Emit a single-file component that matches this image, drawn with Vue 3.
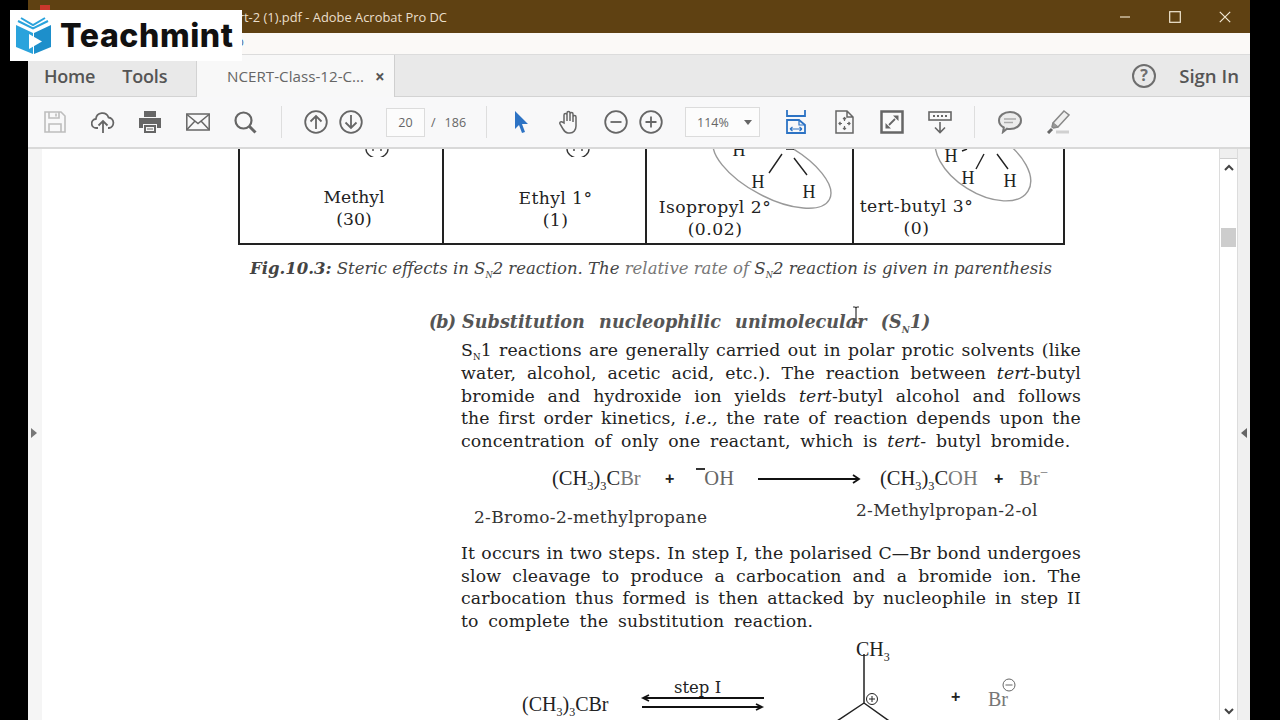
<template>
  <div class="window">
    <header class="titlebar">
      <span class="pdf-icon"></span>
      <span class="title">NCERT-Class-12-Chemistry-Part-2 (1).pdf - Adobe Acrobat Pro DC</span>
      <div class="win-controls">
        <svg width="12" height="12" viewBox="0 0 12 12"><path d="M1 6h10" stroke="#e9dcc4" stroke-width="1.2"/></svg>
        <svg width="12" height="12" viewBox="0 0 12 12"><rect x=".7" y=".7" width="10.6" height="10.6" fill="none" stroke="#f2e8d4" stroke-width="1.2"/></svg>
        <svg width="12" height="12" viewBox="0 0 12 12"><path d="M.8.8l10.4 10.4M11.2.8L.8 11.2" stroke="#f2e8d4" stroke-width="1.2"/></svg>
      </div>
    </header>
    <div class="menubar"><span class="menu-tail">Help</span></div>
    <nav class="tabs">
      <div class="tab-home"><span>Home</span><span>Tools</span></div>
      <div class="tab-doc"><span>NCERT-Class-12-C...</span><b class="tab-x">×</b></div>
      <div class="tab-fill">
        <svg width="26" height="26" viewBox="0 0 26 26"><circle cx="13" cy="13" r="11" fill="none" stroke="#6e6e6e" stroke-width="2"/><text x="13" y="18" text-anchor="middle" class="qm">?</text></svg>
        <span>Sign In</span>
      </div>
    </nav>
    <div class="toolbar">
      <div class="tool-group g1">
        <svg class="ic" viewBox="0 0 24 24" fill="none" stroke="#bdbdbd" stroke-width="1.6"><path d="M2 2h16l4 4v16H2zM6 2v6h10V2M6 22v-8h12v8"/><path d="M13 3.500v3"/></svg>
        <svg class="ic" viewBox="0 0 24 24" fill="none" stroke="#666" stroke-width="1.8"><path d="M7 18H5.500a4.500 4.500 0 0 1-.6-9A6.500 6.500 0 0 1 17.500 7.500 5.300 5.300 0 0 1 18 18h-1"/><path d="M12 23V11M7.500 15.500L12 11l4.500 4.500"/></svg>
        <svg class="ic" viewBox="0 0 24 24"><path fill="#666" d="M6 1h12v6H6zM1 8h22v10h-4v-4H5v4H1z"/><path fill="#666" d="M6 15h12v8H6z"/><path fill="#f7f7f7" d="M8 17h8v4H8z"/><path fill="#666" d="M9 18.500h6v1H9z"/></svg>
        <svg class="ic" viewBox="0 0 24 24" fill="none" stroke="#666" stroke-width="1.5"><rect x=".8" y="4" width="22.400" height="16"/><path d="M1 4.500l11 9 11-9M1 19.500l8-8.500M23 19.500l-8-8.500"/></svg>
        <svg class="ic" viewBox="0 0 24 24" fill="none" stroke="#666" stroke-width="2.200"><circle cx="10.500" cy="10.500" r="8"/><path d="M16.500 16.500l6 6" stroke-width="3"/></svg>
      </div>
      <i class="sep s1"></i>
      <div class="tool-group g2">
        <svg class="ic" viewBox="0 0 24 24" fill="none" stroke="#666" stroke-width="1.800"><circle cx="12" cy="12" r="10.800"/><path d="M12 19V6M6.500 11.500L12 6l5.500 5.500"/></svg>
        <svg class="ic" viewBox="0 0 24 24" fill="none" stroke="#666" stroke-width="1.800"><circle cx="12" cy="12" r="10.800"/><path d="M12 5v13M6.500 12.500L12 18l5.500-5.500"/></svg>
      </div>
      <div class="page-box">20</div>
      <span class="page-total"><span>/</span><span>186</span></span>
      <i class="sep s2"></i>
      <div class="tool-group g3">
        <svg class="ic" viewBox="0 0 24 24"><path fill="#2d73c4" d="M6 1l13 13h-6l3 8-3 1-3-8-4 4z"/></svg>
        <svg class="ic hand" viewBox="0 0 24 24" fill="none" stroke="#666" stroke-width="1.500"><path d="M7 13V5a1.500 1.500 0 0 1 3 0v6V3a1.500 1.500 0 0 1 3 0v8V4a1.500 1.500 0 0 1 3 0v8V7a1.500 1.500 0 0 1 3 0v9c0 4-2.500 7-6 7h-2c-2.500 0-3.500-1.500-5-4l-3-5c-1-2 1.500-3 3-1.500z"/></svg>
        <svg class="ic c1" viewBox="0 0 24 24" fill="none" stroke="#666" stroke-width="1.800"><circle cx="12" cy="12" r="10.800"/><path d="M6.500 12h11"/></svg>
        <svg class="ic c2" viewBox="0 0 24 24" fill="none" stroke="#666" stroke-width="1.800"><circle cx="12" cy="12" r="10.800"/><path d="M6.500 12h11M12 6.500v11"/></svg>
      </div>
      <div class="zoom-box"><span>114%</span><i class="caret"></i></div>
      <div class="tool-group g4">
        <svg class="ic" viewBox="0 0 24 24" fill="none" stroke="#2d73c4" stroke-width="1.800"><path d="M3 0v6h18V0M3 23V10h12l6 5v8z"/><path d="M15 10v5h6M6 19h12M6 19l2.500-2M6 19l2.500 2M18 19l-2.500-2M18 19l-2.500 2" stroke-width="1.200"/></svg>
        <svg class="ic" viewBox="0 0 24 24" fill="none" stroke="#666" stroke-width="1.500"><path d="M4 1h11l6 6v16H4zM15 1v6h6"/><path d="M12.500 7.500v3.500M12.500 16v3.500M7 13.500h3M15 13.500h3M11 9l1.500-1.500L14 9M11 18l1.500 1.500L14 18M8.500 12L7 13.500 8.500 15M16.500 12l1.500 1.500-1.500 1.500" stroke-width="1.200"/></svg>
        <svg class="ic" viewBox="0 0 24 24"><rect x="1.500" y="1.500" width="21" height="21" fill="#fafafa" stroke="#666" stroke-width="2.500"/><path d="M13 5.500h5.500V11zM5.500 13v5.500H11z" fill="#666"/><path d="M15 9l-6 6" stroke="#666" stroke-width="1.800"/></svg>
        <svg class="ic" viewBox="0 0 24 24" fill="none" stroke="#666" stroke-width="1.600"><rect x="1" y="2" width="22" height="8"/><path d="M5 6h2M9 6h2M13 6h2M17 6h2" stroke-width="2"/><path d="M12 12v10M7 17.500l5 5 5-5"/></svg>
      </div>
      <i class="sep s3"></i>
      <div class="tool-group g5">
        <svg class="ic" viewBox="0 0 24 24" fill="none" stroke="#777" stroke-width="2"><path d="M12 2c6 0 11 3.500 11 8.500S18 19 12 19c-1 0-2 0-3-.3L5 22l.8-4.500C3 16 1 13.500 1 10.500 1 5.500 6 2 12 2z" fill="#ececec"/><path d="M6 9h12M6 12.500h9" stroke="#aaa" stroke-width="1.500"/></svg>
        <svg class="ic" viewBox="0 0 24 24" fill="none" stroke="#888" stroke-width="1.500"><path d="M18 1l5 4-11 12-5-4z" fill="#f0f0f0"/><path d="M7 13l-1 4 1.500 1L12 17" fill="#999"/><path d="M2 23l4-4" stroke="#666" stroke-width="3"/><path d="M10 22h13" stroke="#d0d0d0" stroke-width="3"/></svg>
      </div>
    </div>

    <main class="viewer">
      <aside class="rail">
        <svg width="6" height="10" viewBox="0 0 6 10"><path d="M0 0l6 5-6 5z" fill="#777"/></svg>
      </aside>
      <section class="page">
        <div class="rate-table">
          <div class="cell cell-a">
            <svg class="lone" width="26" height="8" viewBox="0 0 26 8" fill="none" stroke="#333" stroke-width="1.300"><path d="M2 0a11 9 0 0 0 22 0M9 0v2M17 0v2"/></svg>
            <span>Methyl</span><span>(30)</span>
          </div>
          <div class="cell cell-b">
            <svg class="lone" width="26" height="8" viewBox="0 0 26 8" fill="none" stroke="#333" stroke-width="1.300"><path d="M2 0a11 9 0 0 0 22 0M9 0v2M17 0v2"/></svg>
            <span>Ethyl 1°</span><span>(1)</span>
          </div>
          <div class="cell cell-c">
            <svg class="mol" width="207" height="94" viewBox="647 148 207 94">
              <ellipse cx="772" cy="168" rx="65" ry="28" transform="rotate(28 772 168)" fill="none" stroke="#999" stroke-width="1.400"/>
              <path d="M782 153L769 172M794 157l13 17M786 148h8" stroke="#222" stroke-width="1.400" fill="none"/>
              <text x="739" y="155" class="h">H</text><text x="758" y="187" class="h">H</text><text x="809" y="197" class="h">H</text>
            </svg>
            <span>Isopropyl 2°</span><span>(0.02)</span>
          </div>
          <div class="cell cell-d">
            <svg class="mol" width="211" height="94" viewBox="854 148 211 94">
              <ellipse cx="983" cy="162" rx="53" ry="30" transform="rotate(32 983 162)" fill="none" stroke="#999" stroke-width="1.400"/>
              <path d="M984 153l-8 15M997 153l11 15M962 150l5-2" stroke="#222" stroke-width="1.400" fill="none"/>
              <text x="951" y="161" class="h">H</text><text x="968" y="183" class="h">H</text><text x="1010" y="186" class="h">H</text>
            </svg>
            <span>tert-butyl 3°</span><span>(0)</span>
          </div>
        </div>

        <p class="caption"><b>Fig.10.3:</b> Steric effects in S<sub>N</sub>2 reaction. The <span class="fade">relative rate of</span> S<sub>N</sub>2 reaction is given in parenthesis</p>

        <h3 class="heading"><span class="b-mark">(b)</span> Substitution&nbsp; nucleophilic&nbsp; unimolecular&nbsp; (S<sub>N</sub>1)
          <svg class="ibeam" width="8" height="18" viewBox="0 0 8 18" fill="none" stroke="#333" stroke-width="1.200"><path d="M1 1h2l1 1 1-1h2M4 2v14M1 17h2l1-1 1 1h2"/></svg>
        </h3>

        <div class="para p1">
          <p>S<sub>N</sub>1 reactions are generally carried out in polar protic solvents (like</p>
          <p>water, alcohol, acetic acid, etc.). The reaction between <em>tert</em>-butyl</p>
          <p>bromide and hydroxide ion yields <em>tert</em>-butyl alcohol and follows</p>
          <p>the first order kinetics, <em>i.e.,</em> the rate of reaction depends upon the</p>
          <p class="last">concentration of only one reactant, which is <em>tert-</em> butyl bromide.</p>
        </div>

        <div class="eq">
          <span class="f1">(CH<sub>3</sub>)<sub>3</sub>C<span class="fade">Br</span></span>
          <span class="plus p-a">+</span>
          <span class="oh"><span class="bar"></span>OH</span>
          <svg class="arrow" width="103" height="10" viewBox="0 0 103 10" fill="none" stroke="#111" stroke-width="1.800"><path d="M0 5h101M95 1l6 4-6 4"/></svg>
          <span class="f2">(CH<sub>3</sub>)<sub>3</sub>C<span class="fade">OH</span></span>
          <span class="plus p-b">+</span>
          <span class="fade br">Br<sup>−</sup></span>
        </div>
        <div class="names">
          <span class="n1">2-Bromo-2-methylpropane</span>
          <span class="n2">2-Methylpropan-2-ol</span>
        </div>

        <div class="para p2">
          <p>It occurs in two steps. In step I, the polarised C—Br bond undergoes</p>
          <p>slow cleavage to produce a carbocation and a bromide ion. The</p>
          <p>carbocation thus formed is then attacked by nucleophile in step II</p>
          <p class="last">to complete the substitution reaction.</p>
        </div>

        <div class="mech">
          <span class="m-left">(CH<sub>3</sub>)<sub>3</sub>C<span class="fade">Br</span></span>
          <span class="m-step">step I</span>
          <svg class="m-arrows" width="124" height="14" viewBox="0 0 124 14" fill="none" stroke="#111" stroke-width="1.800"><path d="M123 2H2M8-1L2 2l6 3M1 11h120M115 8l6 3-6 3"/></svg>
          <span class="m-ch3">CH<sub>3</sub></span>
          <svg class="m-struct" width="70" height="62" viewBox="0 0 70 62" fill="none" stroke="#222" stroke-width="1.500"><path d="M32-9v49M32 40L2 60M32 40l28 20"/><circle cx="40" cy="36" r="5.500" stroke-width="1"/><path d="M37 36h6M40 33v6" stroke-width="1"/></svg>
          <span class="m-plus">+</span>
          <span class="m-br fade">Br</span>
          <svg class="m-neg" width="14" height="14" viewBox="0 0 14 14" fill="none" stroke="#666" stroke-width="1"><circle cx="7" cy="7" r="6"/><path d="M3.500 7h7"/></svg>
        </div>
      </section>
      <div class="scrollbar">
        <div class="sb-top"></div>
        <svg class="sb-arrow" width="10" height="7" viewBox="0 0 10 7" fill="none" stroke="#444" stroke-width="2"><path d="M1 6l4-4 4 4"/></svg>
        <div class="sb-thumb"></div>
        <svg class="sb-arrow sb-down" width="10" height="7" viewBox="0 0 10 7" fill="none" stroke="#444" stroke-width="2"><path d="M1 1l4 4 4-4"/></svg>
      </div>
      <aside class="rail rail-r">
        <svg width="6" height="10" viewBox="0 0 6 10"><path d="M6 0L0 5l6 5z" fill="#666"/></svg>
      </aside>
    </main>
  </div>

  <div class="logo">
    <svg width="38" height="38" viewBox="0 0 38 38">
      <path d="M1 8l17 8v21L1 30z" fill="#2aa3dc"/>
      <path d="M36 8L19 16v21l17-7z" fill="#1d8fcb"/>
      <path d="M3 4l15 7.500L33 4M6 1l12 7 12-7" fill="none" stroke="#2aa3dc" stroke-width="2"/>
      <path d="M14 17l13 7.500L14 32z" fill="#fff"/>
    </svg>
    <span>Teachmint</span>
  </div>
</template>

<script setup>
</script>

<style>
html, body { margin: 0; background: #000; overflow: hidden; }
</style>

<style scoped>
.window { margin-left: 28px; width: 1222px; height: 720px; display: flex; flex-direction: column; overflow: hidden; background: #fff; font-family: "Open Sans", sans-serif; }
.titlebar { height: 33px; flex: none; background: #5f4112; display: flex; align-items: center; position: relative; }
.pdf-icon { width: 10px; height: 12px; margin-left: 12px; background: #c9372c; flex: none; align-self: flex-start; margin-top: 5px; }
.title { color: #eadfcb; font-size: 12.900px; margin-left: -1px; white-space: nowrap; width: 398px; display: flex; justify-content: flex-end; }
.win-controls { margin-left: auto; display: flex; gap: 38px; padding-right: 19px; }
.menubar { height: 22px; flex: none; background: #fbf9f7; border-bottom: 1px solid #dcdcdc; box-sizing: border-box; padding-left: 190px; font-size: 12px; color: #3a6ea5; line-height: 18px; }
.menu-tail { display: inline-block; width: 30px; }
.tabs { height: 42px; flex: none; display: flex; background: #e9e9e9; border-bottom: 1px solid #d3d3d3; box-sizing: border-box; color: #555; font-weight: 600; font-size: 18px; }
.tab-home { width: 168px; display: flex; align-items: center; gap: 27px; padding-left: 16px; box-sizing: border-box; letter-spacing: -.2px; }
.tab-doc { width: 199px; height: 42px; background: #f8f8f8; border-left: 1px solid #d3d3d3; border-right: 1px solid #cfcfcf; box-sizing: border-box; display: flex; align-items: center; padding-left: 30px; font-weight: 400; font-size: 15.200px; color: #666; white-space: nowrap; }
.tab-x { margin-left: 11px; font-size: 17px; font-weight: 700; color: #555; }
.tab-fill { flex: 1; display: flex; align-items: center; justify-content: flex-end; gap: 22px; padding-right: 11px; font-size: 18.600px; }
.qm { font: 700 16px "Open Sans", sans-serif; fill: #6e6e6e; }
.toolbar { height: 52px; flex: none; background: #f8f8f9; border-bottom: 2px solid #d9d9d9; box-sizing: border-box; display: flex; align-items: center; padding-left: 15px; color: #666; font-size: 12.500px; }
.tool-group { display: flex; align-items: center; }
.ic { width: 24px; height: 24px; flex: none; }
.g1 { gap: 23.500px; }
.sep { width: 1px; height: 32px; background: #dedede; flex: none; }
.s1 { margin-left: 24px; }
.g2 { margin-left: 22px; gap: 11px; }
.page-box { margin-left: 23px; width: 39px; height: 29px; border: 1px solid #dcdcdc; background: #fcfcfc; box-sizing: border-box; text-align: center; line-height: 27px; flex: none; }
.page-total { margin-left: 6px; display: flex; gap: 9px; width: 55px; }
.s2 { margin-left: 0; }
.g3 { margin-left: 22px; }
.hand { margin-left: 24px; }
.c1 { margin-left: 23px; }
.c2 { margin-left: 11px; }
.zoom-box { margin-left: 22px; width: 75px; height: 30px; border: 1px solid #dcdcdc; background: #fcfcfc; box-sizing: border-box; display: flex; align-items: center; padding-left: 11px; flex: none; }
.caret { margin-left: 15px; width: 0; height: 0; border-left: 4px solid transparent; border-right: 4px solid transparent; border-top: 5px solid #666; }
.g4 { margin-left: 24px; gap: 24px; }
.s3 { margin-left: 22px; }
.g5 { margin-left: 23px; gap: 24px; }

.viewer { flex: 1; min-height: 0; display: flex; overflow: hidden; }
.rail { width: 14px; flex: none; background: #f5f5f5; display: flex; align-items: center; padding-left: 3px; box-sizing: border-box; padding-bottom: 3px; }
.rail-r { width: 12px; background: #f0f0f0; padding-left: 3px; }
.page { flex: 1; min-width: 0; background: #fff; color: #222; font-family: "DejaVu Serif", serif; overflow: hidden; }

.rate-table { margin-left: 196px; width: 827px; height: 96px; box-sizing: border-box; display: grid; grid-template-columns: 204px 203px 207px 1fr; border: 2px solid #222; border-top: 0; }
.cell { position: relative; display: flex; flex-direction: column; align-items: center; justify-content: flex-end; font-family: "DejaVu Serif", serif; font-size: 17.200px; line-height: 22px; border-right: 2px solid #222; color: #222; }
.cell-a { padding-bottom: 13px; padding-left: 26px; }
.cell-b { padding-bottom: 12px; padding-left: 22px; letter-spacing: .4px; }
.cell-c { padding-bottom: 3px; padding-right: 69px; letter-spacing: .5px; }
.cell-d { padding-bottom: 4px; border-right: 0; padding-right: 84px; letter-spacing: .5px; }
.lone { position: absolute; top: 0; left: 124px; }
.cell-b .lone { left: 121px; }
.mol { position: absolute; left: 0; top: 0; }
.h { font: 18px "Liberation Serif", serif; fill: #222; text-anchor: middle; letter-spacing: 0; }

.caption { margin: 0; padding: 13px 0 0 208px; font: italic 16.500px/21px "DejaVu Serif", serif; color: #444; white-space: nowrap; }
.caption b { font-weight: 700; }
sub { font-size: .5em; line-height: 0; }
.fade { color: #777; }
.heading { margin: 32px 0 0 387px; font: italic 700 17.600px/22px "DejaVu Serif", serif; color: #555; white-space: nowrap; position: relative; word-spacing: 1px; }
.b-mark { letter-spacing: -1px; }
.ibeam { position: absolute; left: 423px; top: -5px; }
.para { margin-left: 419px; width: 620px; font-size: 17.300px; letter-spacing: .15px; line-height: 22.750px; color: #222; }
.para p { margin: 0; text-align: justify; text-align-last: justify; white-space: nowrap; }
.para p.last { text-align-last: left; word-spacing: 4px; }
.p1 { margin-top: 6px; }
.eq { margin: 14px 0 0 510px; display: flex; align-items: center; height: 24px; font: 20.500px "Liberation Serif", serif; color: #222; white-space: nowrap; }
.eq sub { font-size: .6em; }
.f1 { width: 88px; }
.plus { font: 700 16px "Liberation Sans", sans-serif; }
.p-a { margin-left: 25px; }
.oh { margin-left: 22px; padding-left: 8px; position: relative; color: #666; }
.bar { position: absolute; left: 0; top: 1px; width: 9px; height: 1.500px; background: #333; }
.arrow { margin-left: 24px; flex: none; }
.f2 { margin-left: 19px; width: 98px; }
.p-b { margin-left: 16px; }
.br { margin-left: 16px; }
.br sup { font-size: .7em; line-height: 0; }
.names { display: flex; align-items: flex-start; margin-left: 432px; height: 28px; font-size: 17px; letter-spacing: .3px; margin-top: 9px; color: #333; white-space: nowrap; }
.n1 { margin-top: 7px; width: 382px; }
.n2 { margin-top: 0; }
.p2 { margin-top: 14px; }
.mech { position: relative; height: 90px; }
.mech span { position: absolute; white-space: nowrap; font: 20px "Liberation Serif", serif; color: #222; }
.mech sub { font-size: .6em; }
.m-left { left: 480px; top: 60px; }
.mech .m-step { left: 632px; top: 45px; font: 16.500px "DejaVu Serif", serif; }
.m-arrows { position: absolute; left: 599px; top: 63px; overflow: visible; }
.m-ch3 { left: 814px; top: 5px; }
.m-struct { position: absolute; left: 790px; top: 30px; overflow: visible; }
.mech .m-plus { left: 909px; top: 55px; font: 700 16px "Liberation Sans", sans-serif; }
.mech .m-br { left: 946px; top: 55px; color: #777; }
.m-neg { position: absolute; left: 960px; top: 45px; }

.scrollbar { width: 19px; flex: none; background: #fff; border-left: 1px solid #dcdcdc; border-right: 1px solid #dcdcdc; box-sizing: border-box; position: relative; display: flex; flex-direction: column; align-items: center; }
.sb-top { align-self: stretch; height: 9px; background: #efefef; border-bottom: 1px solid #cfcfcf; }
.sb-arrow { margin-top: 5px; flex: none; }
.sb-thumb { margin-top: 57px; width: 15px; height: 19px; background: #cdcdcd; flex: none; }
.sb-down { margin-top: auto; margin-bottom: 5px; }

.logo { position: absolute; left: 10px; top: 10px; width: 232px; height: 51px; background: #fff; display: flex; align-items: center; padding-left: 5px; box-sizing: border-box; }
.logo span { margin-left: 7px; font: 800 32px "Inter", sans-serif; color: #111; letter-spacing: .6px; }
</style>
